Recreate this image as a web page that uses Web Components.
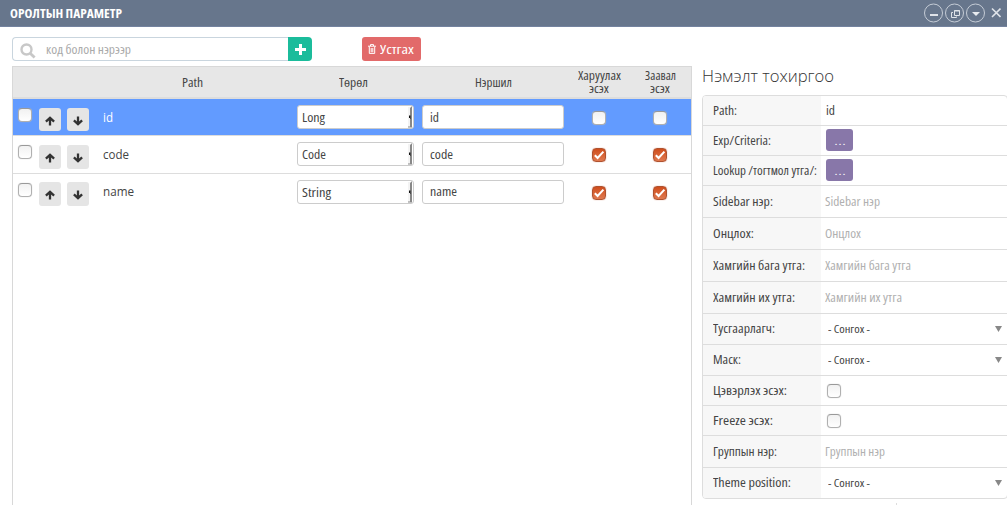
<!DOCTYPE html>
<html lang="mn">
<head>
<meta charset="utf-8">
<title>Оролтын параметр</title>
<style>
html,body{margin:0;height:100%;overflow:hidden;background:#fff}
body{font:13px/16px "Open Sans","Noto Sans",sans-serif;color:#444}
</style>
</head>
<body>
<param-window></param-window>
<script>
function define(name, html, setup) {
  const template = document.createElement('template');
  template.innerHTML = '<style>*{box-sizing:border-box}:host{box-sizing:border-box}</style>' + html;
  customElements.define(name, class extends HTMLElement {
    connectedCallback() {
      if (this.shadowRoot) return;
      const root = this.attachShadow({mode: 'open'});
      root.appendChild(template.content.cloneNode(true));
      if (setup) setup(this, root);
    }
  });
}

/* Condensed one-line text, fitted to the width in its "w" attribute. */
define('n-text', `<style>
:host{display:inline-block;white-space:nowrap;font-stretch:75%;flex:none;text-align:left}
span{display:inline-block;transform-origin:0 50%}
:host([wide]){font-stretch:100%}
</style><span><slot></slot></span>`, (el, root) => {
  const span = root.querySelector('span');
  const w = +el.getAttribute('w');
  const natural = span.getBoundingClientRect().width;
  el.style.width = w + 'px';
  if (natural) span.style.transform = 'scaleX(' + w / natural + ')';
});

define('check-box', `<style>
:host{display:block;width:14px;height:14px;border:1px solid #b0b0b0;border-top-color:#999;border-radius:4px;background:linear-gradient(#f1f1f1,#fff);box-shadow:0 0 1px #bbb;flex:none}
svg{display:none}
:host([checked]){border-color:#b0522f;background:linear-gradient(#cf4d1c,#e07a50);box-shadow:0 0 1px #c87050}
:host([checked]) svg{display:block}
</style><svg width="12" height="12" viewBox="0 0 12 12"><path d="M1.8 6.2 4.6 9 10.4 2.6" fill="none" stroke="#fff" stroke-width="2"/></svg>`);

define('arrow-button', `<style>
:host{display:flex;width:22px;height:23px;border-radius:3px;background:#e5e5e5;align-items:center;justify-content:center;flex:none}
svg{margin-top:2px}
:host([down]) svg{transform:scaleY(-1)}
</style><svg width="10" height="10" viewBox="0 0 10 10"><path d="M5 9.6V2M.9 5.7 5 1.8 9.1 5.7" fill="none" stroke="#333" stroke-width="2.3"/></svg>`);

define('type-select', `<style>
:host{display:flex;width:117px;height:24px;border:1px solid #ccc;border-radius:3px;background:#fff;align-items:center;padding-left:4px;color:#444}
svg{margin-left:auto}
</style><slot></slot><svg width="5" height="22" viewBox="0 0 5 22"><path d="M0 1H2V21H0Z" fill="#f3f3f3"/><path d="M2 2 3.5 .5H4V21.5H0V20.5H2Z" fill="#888"/><path d="M1 9.5H2.5V13H2V12H1Z" fill="#111"/></svg>`);

define('text-input', `<style>
:host{display:flex;width:142px;height:24px;border:1px solid #ccc;border-radius:3px;background:#fff;align-items:center;padding-left:7px;color:#444}
</style><slot></slot>`);

define('param-row', `<style>
:host{display:grid;grid-template-columns:26px 28px 36px 194px 125px 155px 61px 53px;height:38px;border-bottom:1px solid #ddd;align-items:start}
:host([selected]){height:37px;background:#629bff;background-clip:padding-box;color:#fff}
:host([last]){border-color:transparent}
check-box.pick{margin:9px 0 0 5px}
arrow-button{margin-top:9px;height:24px}
:host([selected]) arrow-button{height:23px}
:host([last]) arrow-button{margin-top:8px}
.path{padding-top:10px}
:host([last]) .path{padding-top:9px}
:host([last]) text-input{padding-bottom:2px}
type-select,text-input{margin-top:6px}
.flag{margin:12px 0 0 15px}
</style>
<check-box class="pick"></check-box><arrow-button></arrow-button><arrow-button down></arrow-button>
<div class="path"><slot name="path"></slot></div>
<type-select><slot name="type"></slot></type-select>
<text-input><slot name="label"></slot></text-input>
<check-box class="flag"></check-box><check-box class="flag"></check-box>`, (el, root) => {
  if (!el.hasAttribute('selected'))
    root.querySelectorAll('.flag').forEach(c => c.setAttribute('checked', ''));
});

define('param-table', `<style>
:host{display:block;width:680px;height:439px;border:1px solid #d8d8d8;border-width:1px 1px 0}
header{display:grid;grid-template-columns:84px 191px 131px 148px 64px 58px;height:32px;background:#e7e7e7;border-bottom:2px solid #ddd;align-items:center;justify-items:center}
header div{display:flex;flex-direction:column;align-items:center;line-height:13px}
</style>
<header><i></i>
<n-text w="21">Path</n-text><n-text w="29">Төрөл</n-text><n-text w="37">Нэршил</n-text>
<div><n-text w="43">Харуулах</n-text><n-text w="20">эсэх</n-text></div>
<div><n-text w="31">Заавал</n-text><n-text w="20">эсэх</n-text></div></header>
<slot></slot>`);

define('tool-bar', `<style>
:host{display:flex;height:24px}
.search{display:flex;align-items:center;width:276px;border:1px solid #c9d5de;border-right:0;border-radius:4px 0 0 4px;padding-left:7px;color:#aaa}
.search svg{margin:3px 10px 0 0}
.add{width:24px;background:#1bbc9b;border-radius:0 4px 4px 0;display:grid;place-items:center}
.del{width:59px;margin-left:50px;background:#e26a6a;border-radius:3px;color:#fff;display:flex;align-items:center;padding:0 0 1px 6px;gap:4px}
</style>
<div class="search"><svg width="16" height="16" viewBox="0 0 16 16" fill="none" stroke="#c8c8c8"><circle cx="6.5" cy="6.5" r="5" stroke-width="2.4"/><path d="m10.4 10.4 4.2 4.2" stroke-width="2.8"/></svg><n-text w="85">код болон нэрээр</n-text></div>
<div class="add"><svg width="11" height="11" viewBox="0 0 11 11"><path d="M5.5 0V11M0 5.5H11" stroke="#fff" stroke-width="3"/></svg></div>
<div class="del"><svg width="8" height="10" viewBox="0 0 8 10" fill="none" stroke="#fff"><path d="M0 2.2H8M2.5 2V.6H5.5V2M1.3 2.5V9.4H6.7V2.5M3.2 4V8.3M4.8 4V8.3"/></svg><n-text w="34">Устгах</n-text></div>`);

define('title-bar', `<style>
:host{display:flex;height:27px;background:#67768c;border-bottom:1px solid #74839f;color:#fff;align-items:center;padding:0 6px 0 10px;font-weight:700}
svg{margin-left:auto}
</style><n-text w="112"><slot></slot></n-text>
<svg width="78" height="26" viewBox="923 0 78 26" fill="none" stroke="#dfe3e9">
<g stroke="#c5ccd6"><circle cx="933.5" cy="13" r="9"/><circle cx="954.5" cy="13" r="9"/><circle cx="975.5" cy="13" r="9"/></g>
<path d="M930 15H938" stroke-width="2"/><path d="M954.5 10.5H959.5V15.5H954.5ZM954 11H960" /><path d="M953 12.5H951.5V17.5H956.5V16.5"/><path d="M972 12H980L976 16Z" fill="#e8ebef" stroke="none"/><path d="m992 8.5 8.5 8.5M1000.5 8.5 992 17" stroke-width="1.6"/></svg>`);

define('prop-row', `<style>
:host{display:grid;grid-template-columns:118px 1fr;height:var(--h);border-bottom:1px solid #ddd}
:host(:last-child){border-bottom:0}
.label{background:#f7f7f7;padding:0 0 2px 10px;display:flex;align-items:center;color:#444}
.value{display:flex;align-items:center;padding:0 0 1px 4px;color:#b0b0b0}
.value.plain{padding:0 0 2px 5px;color:#444}
.value.hint{padding-bottom:2px}
.value.select{padding:0 5px 0 7px;justify-content:space-between;font-size:11px;color:#444}
.value.check{padding:0 0 0 6px}
.value.button{padding-bottom:2px}
.dots{width:27px;height:22px;border-radius:3px;background:#8877a9;color:#fff;display:grid;place-items:center;margin-left:1px;font-weight:300}
</style><div class="label"><slot></slot></div><div class="value"></div>`, (el, root) => {
  const value = root.querySelector('.value');
  const kind = el.getAttribute('kind');
  const text = el.getAttribute('value');
  const w = el.getAttribute('vw');
  value.classList.add(kind);
  el.style.setProperty('--h', el.getAttribute('h') + 'px');
  value.innerHTML = {
    plain: `<n-text w="${w}">${text}</n-text>`,
    hint: `<n-text w="${w}">${text}</n-text>`,
    button: '<div class="dots"><n-text w="12">...</n-text></div>',
    select: '<n-text w="42">- Сонгох -</n-text><svg width="7" height="6" viewBox="0 0 7 6"><path d="M0 0H7L3.5 6Z" fill="#888"/></svg>',
    check: '<check-box></check-box>'
  }[kind];
});

define('prop-panel', `<style>
:host{display:block;width:306px;flex:none}
h2{margin:0 0 8px;font:300 17px/22px "Open Sans","Noto Sans",sans-serif;height:22px;color:#333}
section{border:1px solid #ddd;border-radius:4px;overflow:hidden}
.tick{height:3px;width:1px;background:#ddd;margin:4px 0 0 194px}
</style><h2><n-text wide w="132">Нэмэлт тохиргоо</n-text></h2><section><slot></slot></section><div class="tick"></div>`);

define('param-window', `<style>
:host{display:block;width:1007px;height:505px;overflow:hidden;background:#fff}
main{display:flex;padding:10px 0 0 12px}
.left{width:680px;flex:none}
param-table{margin-top:5px}
prop-panel{margin:28px 0 0 10px}
</style>
<title-bar>ОРОЛТЫН ПАРАМЕТР</title-bar>
<main><div class="left"><tool-bar></tool-bar>
<param-table>
<param-row selected><n-text wide slot="path" w="10">id</n-text><n-text slot="type" w="23">Long</n-text><n-text slot="label" w="9">id</n-text></param-row>
<param-row><n-text wide slot="path" w="26">code</n-text><n-text slot="type" w="24">Code</n-text><n-text slot="label" w="23">code</n-text></param-row>
<param-row last><n-text wide slot="path" w="31">name</n-text><n-text slot="type" w="29">String</n-text><n-text slot="label" w="27">name</n-text></param-row>
</param-table></div>
<prop-panel>
<prop-row h="30" kind="plain" value="id" vw="9"><n-text w="24">Path:</n-text></prop-row>
<prop-row h="30" kind="button"><n-text w="58">Exp/Criteria:</n-text></prop-row>
<prop-row h="30" kind="button"><n-text w="104">Lookup /тогтмол утга/:</n-text></prop-row>
<prop-row h="32" kind="hint" value="Sidebar нэр" vw="55"><n-text w="60">Sidebar нэр:</n-text></prop-row>
<prop-row h="32" kind="hint" value="Онцлох" vw="36"><n-text w="41">Онцлох:</n-text></prop-row>
<prop-row h="32" kind="hint" value="Хамгийн бага утга" vw="86"><n-text w="92">Хамгийн бага утга:</n-text></prop-row>
<prop-row h="32" kind="hint" value="Хамгийн их утга" vw="77"><n-text w="82">Хамгийн их утга:</n-text></prop-row>
<prop-row h="31" kind="select"><n-text w="62">Тусгаарлагч:</n-text></prop-row>
<prop-row h="31" kind="select"><n-text w="28">Маск:</n-text></prop-row>
<prop-row h="30" kind="check"><n-text w="74">Цэвэрлэх эсэх:</n-text></prop-row>
<prop-row h="30" kind="check"><n-text w="60">Freeze эсэх:</n-text></prop-row>
<prop-row h="32" kind="hint" value="Группын нэр" vw="60"><n-text w="64">Группын нэр:</n-text></prop-row>
<prop-row h="30" kind="select"><n-text w="78">Theme position:</n-text></prop-row>
</prop-panel></main>`);
</script>
</body>
</html>
